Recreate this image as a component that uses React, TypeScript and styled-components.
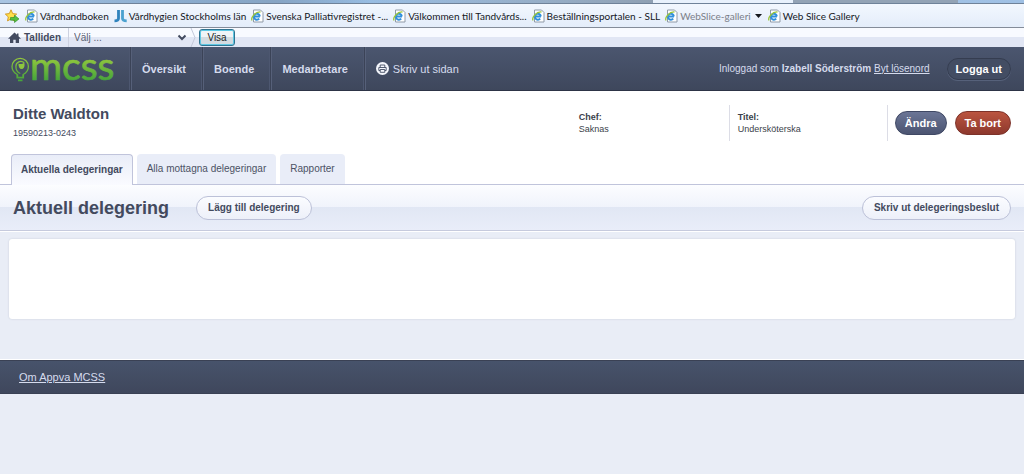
import React from "react";
import styled, { createGlobalStyle, css } from "styled-components";

const GlobalStyle = createGlobalStyle`
  *, *::before, *::after { box-sizing: border-box; }
  body {
    margin: 0;
    background: #e9edf6;
    color: #434a5e;
    font-family: "Liberation Sans", Arial, sans-serif;
    font-size: 10px;
    line-height: 12px;
  }
  h1, h2, p, dl, dd { margin: 0; }
  button, select { font-family: inherit; }
`;

/* Browser chrome */
const TabStrip = styled.div`
  display: flex;
  height: 4px;
  background: linear-gradient(90deg, #a9c5e2, #8fb6de 20%, #a5c6e8 60%, #9fc0e4);
  border-bottom: 1px solid #6f8299;
`;

const StripPart = styled.span<{ $grow: number; $tone: string }>`
  flex: ${(p) => p.$grow} 0 0;
  background: ${(p) => p.$tone};
`;

const Bookmarks = styled.nav`
  display: flex;
  align-items: center;
  height: 24px;
  padding: 0 5px;
  gap: 5px;
  background: linear-gradient(#f2f7fe, #e4edfa);
  border-bottom: 1px solid #848c99;
  font-family: Lato, "Noto Sans", sans-serif;
  white-space: nowrap;
`;

const Bookmark = styled.a<{ $muted?: boolean }>`
  display: flex;
  align-items: center;
  gap: 2px;
  color: ${(p) => (p.$muted ? "#7b8089" : "#15181e")};
  font-size: 10px;
  text-decoration: none;
  svg { flex: none; }
`;

/* Site selector */
const SiteBar = styled.form`
  display: flex;
  align-items: center;
  height: 19px;
  padding-left: 8px;
  background: linear-gradient(#f8faff 0 50%, #e1e6f4 50% 100%);
`;

const SiteName = styled.span`
  display: flex;
  align-items: center;
  gap: 3px;
  padding-right: 7px;
  font-weight: bold;
`;

const SelectWrap = styled.label`
  display: flex;
  align-items: center;
  align-self: stretch;
  border-left: 1px solid #cdd1e0;
  svg { margin-left: -12px; pointer-events: none; }
`;

const SiteSelect = styled.select`
  appearance: none;
  width: 120px;
  height: 18px;
  padding: 0 5px;
  border: 0;
  background: transparent;
  color: #5b6172;
  font-size: 10px;
`;

const Divider = styled.svg`
  margin: 0 3px;
`;

const ShowButton = styled.button`
  height: 17px;
  width: 36px;
  padding: 0;
  border: 1px solid #2f7390;
  border-radius: 3px;
  background: linear-gradient(#f0f4f7 0 50%, #d3dbe1 50% 100%);
  box-shadow: inset 0 0 0 1px #5ec8e4;
  color: #1c1f26;
  font-size: 10px;
  line-height: 13px;
`;

/* Main header */
const Header = styled.header`
  display: flex;
  align-items: center;
  height: 44px;
  padding-right: 13px;
  background: linear-gradient(#4b566f, #3e475c);
  border-bottom: 1px solid #2d3446;
  box-shadow: 0 1px 0 #9298ac;
  color: #d5dbed;
  white-space: nowrap;
`;

const Logo = styled.a`
  display: flex;
  width: 131px;
  padding-left: 11px;
  svg { overflow: visible; }
  text {
    font-family: Lato, sans-serif;
    font-size: 39px;
  }
`;

const MainNav = styled.nav`
  display: flex;
  align-self: stretch;
`;

const NavLink = styled.a<{ $light?: boolean }>`
  display: flex;
  align-items: center;
  gap: 4px;
  padding: 0 17px 0 10px;
  border-left: 1px solid #566079;
  box-shadow: -1px 0 0 #3b4357, -2px 0 0 #4d5770;
  color: inherit;
  font-size: 11px;
  font-weight: ${(p) => (p.$light ? "normal" : "bold")};
  text-decoration: none;
`;

const Account = styled.p`
  margin-left: auto;
  padding-right: 17px;
  a { color: inherit; }
`;

const pill = css`
  height: 24px;
  border-radius: 12px;
  font-weight: bold;
  line-height: 14px;
  white-space: nowrap;
`;

const LogoutButton = styled.button`
  ${pill}
  height: 22px;
  padding: 0 8px;
  border: 1px solid #353d50;
  background: #434d63;
  box-shadow: 0 1px 0 #56617a;
  color: #fff;
  font-size: 11px;
`;

/* Person */
const Person = styled.section`
  display: flex;
  align-items: flex-start;
  padding: 14px 13px 0;
  min-height: 63px;
  background: #fff;
`;

const PersonTitle = styled.div`
  flex: 1;
`;

const PersonName = styled.h1`
  font-size: 15px;
  line-height: 18px;
`;

const PersonNumber = styled.p`
  margin-top: 4px;
  font-size: 9px;
`;

const Facts = styled.dl`
  display: flex;
  font-size: 9px;
  color: #3b3f4a;
`;

const Fact = styled.div`
  width: 158px;
  height: 36px;
  padding: 6px 0 0 8px;
  & + & { border-left: 1px solid #dcdde6; }
  dt { font-weight: bold; }
`;

const Actions = styled.div`
  display: flex;
  gap: 8px;
  height: 36px;
  padding: 6px 0 0 7px;
  border-left: 1px solid #dcdde6;
`;

const ActionButton = styled.button<{ $danger?: boolean }>`
  ${pill}
  padding: 0 9px;
  border: 1px solid ${(p) => (p.$danger ? "#7d3229" : "#3f4864")};
  background: ${(p) =>
    p.$danger ? "linear-gradient(#bb5540, #8d382d)" : "linear-gradient(#6b7596, #4b5471)"};
  color: #fff;
  font-size: 11px;
`;

/* Tabs and section title */
const Tabs = styled.nav`
  display: flex;
  align-items: flex-end;
  gap: 4px;
  padding-left: 11px;
  background: #fff;
  border-bottom: 1px solid #c0c4db;
`;

const Tab = styled.a<{ $active?: boolean }>`
  height: 30px;
  padding: 9px 10px 0;
  border-radius: 4px 4px 0 0;
  background: #e9edf8;
  color: #4c5264;
  text-decoration: none;
  ${(p) =>
    p.$active &&
    css`
      height: 31px;
      margin-bottom: -1px;
      padding: 9px 9px 0;
      border: 1px solid #c0c4db;
      border-bottom: 0;
      background: linear-gradient(#e9edf8, #fafbff);
      font-weight: bold;
      color: #434a5e;
    `}
`;

const TitleBar = styled.div`
  display: flex;
  align-items: center;
  height: 46px;
  padding: 0 13px;
  background: linear-gradient(#fcfdff, #f0f3fb 50%, #e1e7f4 50%, #e9edf9);
  border-bottom: 1px solid #c6cadd;
  box-shadow: 0 1px 0 #fff;
`;

const SectionTitle = styled.h2`
  margin-right: 27px;
  font-size: 18px;
  line-height: 20px;
`;

const OutlineButton = styled.button<{ $end?: boolean }>`
  ${pill}
  margin-left: ${(p) => (p.$end ? "auto" : "0")};
  padding: 0 11px;
  border: 1px solid #bcc1d8;
  background: linear-gradient(#fbfcff, #edf0f9);
  color: #434a5e;
  font-size: 10px;
`;

const Card = styled.main`
  min-height: 80px;
  margin: 8px 9px 41px;
  border-radius: 3px;
  background: #fff;
  box-shadow: 0 0 2px #c3c8d6;
`;

const Footer = styled.footer`
  display: flex;
  align-items: center;
  height: 34px;
  padding: 0 19px;
  border: solid #3a4154;
  border-width: 1px 0;
  background: linear-gradient(#47536b, #3f475c);
  box-shadow: 0 0 0 1px #fff;
  a { color: #d5dbed; font-size: 11px; }
`;

const StarIcon = () => (
  <svg width="15" height="14" viewBox="0 0 15 14">
    <path d="M6 .8 7.700 4.600l4 .5-3 2.800.8 4L6 9.900l-3.500 2 .8-4-3-2.800 4-.5z" fill="#ffe04a" stroke="#cf9420" strokeWidth=".9" />
    <path d="M5.500 8.500h4V6.200l4.500 3.700-4.500 3.600v-2.300h-4z" fill="#55c13f" stroke="#2a8a26" strokeWidth=".6" />
  </svg>
);

const PageIcon = () => (
  <svg width="13" height="14" viewBox="0 0 13 14">
    <path d="M2.500 1h7l2.500 2.500V13H2.500z" fill="#fff" stroke="#8f9aa8" />
    <path d="M9 7.500H3.200M8.900 7.300a3 3 0 1 0-.7 2.400" fill="none" stroke="#2f8fdc" strokeWidth="1.900" />
    <path d="M1 11.500C-.5 8.500 4.500 2.500 9.500 3" fill="none" stroke="#9ac43a" strokeWidth="1.300" />
  </svg>
);

const CareIcon = () => (
  <svg width="13" height="14" viewBox="0 0 13 14" fill="none" stroke="#2f83bd" strokeWidth="2.800">
    <path d="M4.500 1v8.500q0 2.300-4 2.300" />
    <path d="M8.500 1v8.500q0 2.300 4.200 2.300" stroke="#4ba1cf" />
  </svg>
);

const HomeIcon = () => (
  <svg width="13" height="12" viewBox="0 0 13 12" fill="#434b60">
    <path d="M6.500.5 0 6.700h2V11h3.300V7.700h2.400V11H11V6.700h2L10.500 4.300V1.500H9v1.300z" />
  </svg>
);

const LogoMark = () => (
  <svg width="106" height="43" viewBox="0 0 106 43">
    <defs>
      <linearGradient id="leaf" gradientUnits="userSpaceOnUse" x1="0" y1="11" x2="0" y2="33">
        <stop offset="0" stopColor="#93c83d" />
        <stop offset="1" stopColor="#47a63a" />
      </linearGradient>
    </defs>
    <g fill="none" stroke="url(#leaf)" strokeWidth="1.300">
      <path d="M6.300 27.500C3 25.800 1 23 1 19.500a8.200 8.200 0 0 1 16.400 0c0 3.500-2 6.300-5.200 8" />
      <path d="M9.300 26.500c-2.600-1-4.400-3.500-4.400-7a4.900 4.900 0 0 1 8.200-3.700" />
      <path d="M6.300 27.300v3.400h5.900v-3.400M7 33.300h4.500" strokeWidth="1.800" />
    </g>
    <path d="M7.500 16.500c1.200 1 4 .8 5.800-1 .8 4-.4 6.500-2.700 6.500-2 0-3.300-2-3.100-5.500z" fill="#8dc63f" />
    <text x="19" y="33" fill="url(#leaf)" stroke="url(#leaf)" strokeWidth=".7">mcss</text>
  </svg>
);

const PrintIcon = () => (
  <svg width="13" height="13" viewBox="0 0 13 13">
    <circle cx="6.500" cy="6.500" r="6.500" fill="#f4f6fc" />
    <path d="M4.200 5.500V3h4.600v2.500M4.200 8.500H2.800v-3h7.400v3H8.800M4.200 7.500h4.600v2.800H4.200z" fill="none" stroke="#434d63" strokeWidth=".9" />
  </svg>
);

const bookmarks = [
  { label: "Vårdhandboken", icon: <PageIcon /> },
  { label: "Vårdhygien Stockholms län", icon: <CareIcon /> },
  { label: "Svenska Palliativregistret -...", icon: <PageIcon /> },
  { label: "Välkommen till Tandvårds...", icon: <PageIcon /> },
  { label: "Beställningsportalen - SLL", icon: <PageIcon /> },
  { label: "WebSlice-galleri", icon: <PageIcon />, muted: true },
  { label: "Web Slice Gallery", icon: <PageIcon /> },
];

export default function App() {
  return (
    <>
      <GlobalStyle />
      <TabStrip>
        <StripPart $grow={25} $tone="transparent" />
        <StripPart $grow={628} $tone="linear-gradient(90deg, transparent, #87a5c4 40%, transparent 55%, #8fa0b3)" />
        <StripPart $grow={140} $tone="#e8f1fc" />
        <StripPart $grow={165} $tone="#93a3b5" />
        <StripPart $grow={66} $tone="transparent" />
      </TabStrip>
      <Bookmarks aria-label="Favoriter">
        <StarIcon />
        {bookmarks.map((b) => (
          <Bookmark key={b.label} href="#" $muted={b.muted}>
            {b.icon}
            {b.label}
            {b.muted && (
              <svg width="10" height="6" viewBox="0 0 10 6">
                <path d="M2 1h7L5.500 5z" fill="#15181e" />
              </svg>
            )}
          </Bookmark>
        ))}
      </Bookmarks>

      <SiteBar>
        <SiteName>
          <HomeIcon />
          Talliden
        </SiteName>
        <SelectWrap>
          <SiteSelect aria-label="Välj">
            <option>Välj ...</option>
          </SiteSelect>
          <svg width="10" height="7" viewBox="0 0 10 7">
            <path d="m1.500 1.500 3.500 3.500 3.500-3.500" fill="none" stroke="#434b60" strokeWidth="2" />
          </svg>
        </SelectWrap>
        <Divider width="6" height="19" viewBox="0 0 6 19">
          <path d="m1 0 4 9.500L1 19" fill="none" stroke="#c3c8da" />
        </Divider>
        <ShowButton type="button">Visa</ShowButton>
      </SiteBar>

      <Header>
        <Logo href="#" aria-label="mcss">
          <LogoMark />
        </Logo>
        <MainNav>
          <NavLink href="#">Översikt</NavLink>
          <NavLink href="#">Boende</NavLink>
          <NavLink href="#">Medarbetare</NavLink>
          <NavLink href="#" $light>
            <PrintIcon />
            Skriv ut sidan
          </NavLink>
        </MainNav>
        <Account>
          Inloggad som <b>Izabell Söderström</b> <a href="#">Byt lösenord</a>
        </Account>
        <LogoutButton>Logga ut</LogoutButton>
      </Header>

      <Person>
        <PersonTitle>
          <PersonName>Ditte Waldton</PersonName>
          <PersonNumber>19590213-0243</PersonNumber>
        </PersonTitle>
        <Facts>
          <Fact>
            <dt>Chef:</dt>
            <dd>Saknas</dd>
          </Fact>
          <Fact>
            <dt>Titel:</dt>
            <dd>Undersköterska</dd>
          </Fact>
        </Facts>
        <Actions>
          <ActionButton>Ändra</ActionButton>
          <ActionButton $danger>Ta bort</ActionButton>
        </Actions>
      </Person>

      <Tabs>
        <Tab href="#" $active>Aktuella delegeringar</Tab>
        <Tab href="#">Alla mottagna delegeringar</Tab>
        <Tab href="#">Rapporter</Tab>
      </Tabs>

      <TitleBar>
        <SectionTitle>Aktuell delegering</SectionTitle>
        <OutlineButton>Lägg till delegering</OutlineButton>
        <OutlineButton $end>Skriv ut delegeringsbeslut</OutlineButton>
      </TitleBar>

      <Card />

      <Footer>
        <a href="#">Om Appva MCSS</a>
      </Footer>
    </>
  );
}
